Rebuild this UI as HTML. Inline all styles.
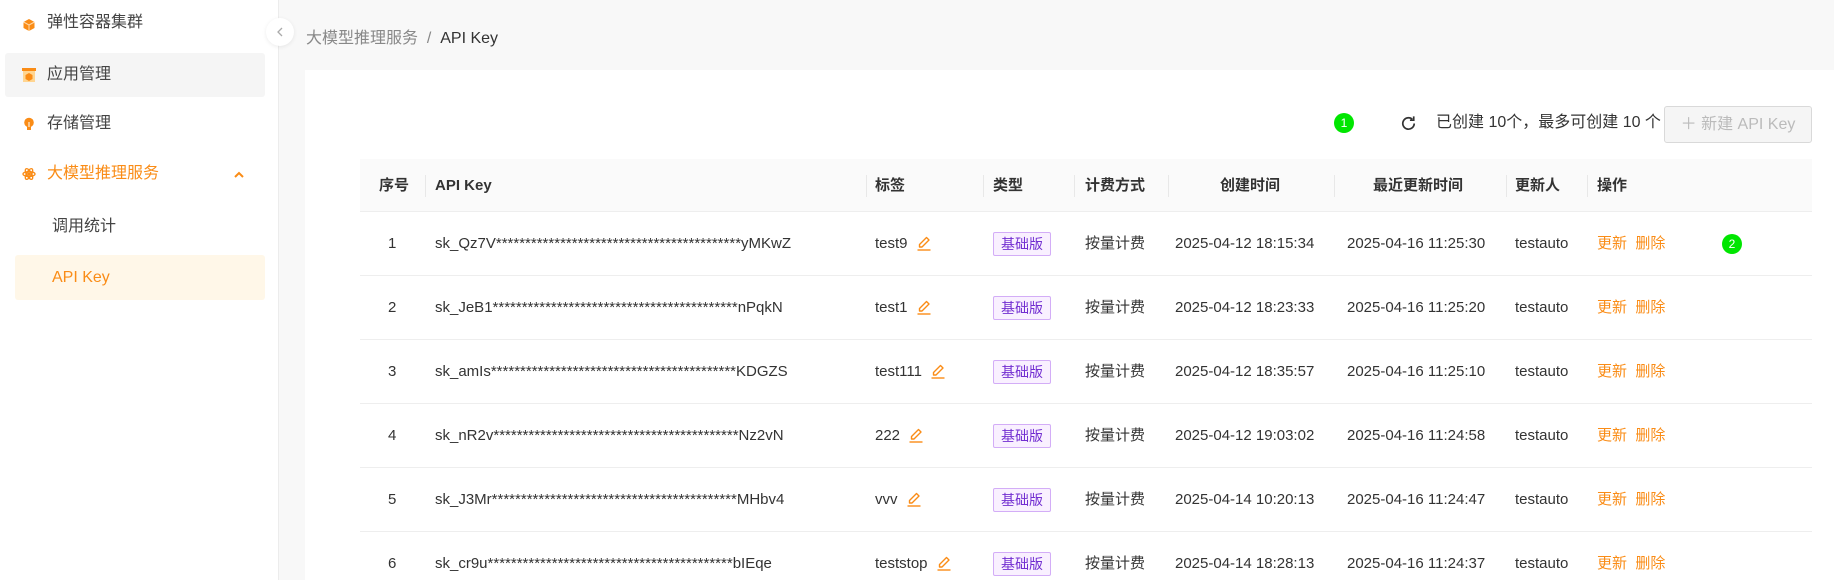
<!DOCTYPE html>
<html style="overflow:hidden;height:580px;background:#f8f8f8"><head><meta charset="utf-8"><style>
*{box-sizing:border-box;margin:0;padding:0}
body{width:1834px;height:580px;overflow:hidden;background:#f8f8f8;font-family:"Liberation Sans","Noto Sans CJK SC",sans-serif;color:#333;position:relative}
#wrap{position:absolute;left:0;top:0;width:1834px;height:580px;overflow:hidden}
.a{position:absolute;white-space:nowrap}
.side{position:absolute;left:0;top:0;width:279px;height:580px;background:#fff;border-right:1px solid #ececec}
.mi{position:absolute;font-size:16px;line-height:20px;color:#444}
.ic{position:absolute;width:14px;height:14px}
.card{position:absolute;left:305px;top:70px;width:1529px;height:510px;background:#fff}
.hd{position:absolute;left:360px;top:159px;width:1452px;height:53px;background:#fafafa;border-bottom:1px solid #eee}
.th{position:absolute;top:0;line-height:53px;font-size:15px;font-weight:bold;color:#333}
.sep{position:absolute;top:16px;width:1px;height:22px;background:#e8e8e8}
.row{position:absolute;left:360px;width:1452px;height:64px;border-bottom:1px solid #eee;font-size:15px;color:#333}
.row .a{line-height:64px}
.tag{position:absolute;left:633px;top:20px;width:58px;height:24px;border:1px solid #d3adf7;background:#f9f0ff;color:#722ed1;font-size:14px;line-height:22px!important;text-align:center;border-radius:2px}
.or{color:#fa8c16}
.pen{display:inline-block;vertical-align:middle;margin-left:8px;margin-top:-3px}
</style></head><body><div id="wrap">
<div class="side">
 <svg class="ic" style="left:22px;top:18px" viewBox="0 0 14 14"><path d="M7 1L12.5 4v6L7 13 1.5 10V4z" fill="#fa8c16"/><path d="M1.5 4L7 7l5.5-3M7 7v6" stroke="#ffd8a8" stroke-width="1" fill="none"/></svg>
 <div class="mi" style="left:47px;top:13px">弹性容器集群</div>
 <div class="a" style="left:5px;top:53px;width:260px;height:44px;background:#f5f5f5;border-radius:3px"></div>
 <svg class="ic" style="left:22px;top:68px" viewBox="0 0 14 14"><rect x="0" y="0" width="14" height="3" fill="#fa8c16"/><rect x="1" y="3" width="12" height="11" fill="#ffd591"/><path d="M7 5l3.5 2v4L7 13 3.5 11V7z" fill="#fa8c16"/></svg>
 <div class="mi" style="left:47px;top:65px">应用管理</div>
 <svg class="ic" style="left:22px;top:117px" viewBox="0 0 14 14"><circle cx="7" cy="5.5" r="4.8" fill="#fa8c16"/><rect x="5" y="10" width="4" height="3" fill="#fa8c16"/><path d="M7 5v5" stroke="#fff" stroke-width="1"/></svg>
 <div class="mi" style="left:47px;top:114px">存储管理</div>
 <svg class="ic" style="left:22px;top:167px" viewBox="0 0 14 14" fill="none" stroke="#fa8c16" stroke-width="1.3"><ellipse cx="7" cy="7" rx="6" ry="2.5"/><ellipse cx="7" cy="7" rx="6" ry="2.5" transform="rotate(60 7 7)"/><ellipse cx="7" cy="7" rx="6" ry="2.5" transform="rotate(-60 7 7)"/><circle cx="7" cy="7" r="1.2" fill="#fa8c16"/></svg>
 <div class="mi" style="left:47px;top:164px;color:#fa8c16">大模型推理服务</div>
 <svg class="a" style="left:233px;top:170px" width="12" height="10" viewBox="0 0 12 10"><path d="M2 7l4-4 4 4" stroke="#fa8c16" stroke-width="2" fill="none"/></svg>
 <div class="mi" style="left:52px;top:217px">调用统计</div>
 <div class="a" style="left:15px;top:255px;width:250px;height:45px;background:#fff7e8;border-radius:3px"></div>
 <div class="mi" style="left:52px;top:268px;color:#fa8c16">API Key</div>
</div>
<div class="a" style="left:266px;top:18px;width:28px;height:28px;border-radius:50%;background:#fff;box-shadow:0 1px 4px rgba(0,0,0,.08)"></div>
<svg class="a" style="left:275px;top:26px" width="10" height="12" viewBox="0 0 10 12"><path d="M7 2L3 6l4 4" stroke="#aaa" stroke-width="1.3" fill="none"/></svg>
<div class="a" style="left:306px;top:29px;font-size:16px;line-height:20px;color:#888">大模型推理服务 &nbsp;/&nbsp; <span style="color:#333">API Key</span></div>
<div class="card"></div>
<div class="a" style="left:1334px;top:113px;width:20px;height:20px;border-radius:50%;background:#00e600;color:#fff;font-size:12px;line-height:20px;text-align:center">1</div>
<svg class="a" style="left:1399px;top:114px" width="19" height="19" viewBox="0 0 20 20"><path d="M16 10a6 6 0 1 1-2-4.5" stroke="#333" stroke-width="1.8" fill="none"/><path d="M15.5 2.5v4h-4" stroke="#333" stroke-width="1.8" fill="none"/></svg>
<div class="a" style="left:1436px;top:113px;font-size:16px;line-height:20px;color:#333">已创建 10个，最多可创建 10 个</div>
<div class="a" style="left:1664px;top:106px;width:148px;height:37px;border:1px solid #d9d9d9;background:#f5f5f5;border-radius:3px;color:#bbb;font-size:16px;line-height:35px;text-align:center">＋ 新建 API Key</div>
<div class="hd">
 <div class="th" style="left:19px">序号</div><div class="sep" style="left:65px"></div>
 <div class="th" style="left:75px">API Key</div><div class="sep" style="left:506px"></div>
 <div class="th" style="left:515px">标签</div><div class="sep" style="left:623px"></div>
 <div class="th" style="left:633px">类型</div><div class="sep" style="left:714px"></div>
 <div class="th" style="left:725px">计费方式</div><div class="sep" style="left:808px"></div>
 <div class="th" style="left:860px">创建时间</div><div class="sep" style="left:974px"></div>
 <div class="th" style="left:1013px">最近更新时间</div><div class="sep" style="left:1146px"></div>
 <div class="th" style="left:1155px">更新人</div><div class="sep" style="left:1227px"></div>
 <div class="th" style="left:1237px">操作</div>
</div>
<svg width="0" height="0" style="position:absolute"><defs><symbol id="pn" viewBox="0 0 16 16"><path d="M10.5 2.5l2.5 2.5-7 7H3.5V9.5z" stroke="#fa8c16" stroke-width="1.4" fill="none" stroke-linejoin="round"/><path d="M1.5 15h13" stroke="#fa8c16" stroke-width="1.4"/></symbol></defs></svg>
<div class="row" style="top:212px"><div class="a" style="left:28px">1</div><div class="a" style="left:75px">sk_Qz7V******************************************yMKwZ</div><div class="a" style="left:515px">test9<svg class="pen" width="16" height="16"><use href="#pn"/></svg></div><div class="tag">基础版</div><div class="a" style="left:725px">按量计费</div><div class="a" style="left:815px">2025-04-12 18:15:34</div><div class="a" style="left:987px">2025-04-16 11:25:30</div><div class="a" style="left:1155px">testauto</div><div class="a or" style="left:1237px">更新 &nbsp;删除</div><div class="a" style="left:1362px;top:22px;width:20px;height:20px;border-radius:50%;background:#00e600;color:#fff;font-size:12px;line-height:20px!important;text-align:center">2</div></div>
<div class="row" style="top:276px"><div class="a" style="left:28px">2</div><div class="a" style="left:75px">sk_JeB1******************************************nPqkN</div><div class="a" style="left:515px">test1<svg class="pen" width="16" height="16"><use href="#pn"/></svg></div><div class="tag">基础版</div><div class="a" style="left:725px">按量计费</div><div class="a" style="left:815px">2025-04-12 18:23:33</div><div class="a" style="left:987px">2025-04-16 11:25:20</div><div class="a" style="left:1155px">testauto</div><div class="a or" style="left:1237px">更新 &nbsp;删除</div></div>
<div class="row" style="top:340px"><div class="a" style="left:28px">3</div><div class="a" style="left:75px">sk_amIs******************************************KDGZS</div><div class="a" style="left:515px">test111<svg class="pen" width="16" height="16"><use href="#pn"/></svg></div><div class="tag">基础版</div><div class="a" style="left:725px">按量计费</div><div class="a" style="left:815px">2025-04-12 18:35:57</div><div class="a" style="left:987px">2025-04-16 11:25:10</div><div class="a" style="left:1155px">testauto</div><div class="a or" style="left:1237px">更新 &nbsp;删除</div></div>
<div class="row" style="top:404px"><div class="a" style="left:28px">4</div><div class="a" style="left:75px">sk_nR2v******************************************Nz2vN</div><div class="a" style="left:515px">222<svg class="pen" width="16" height="16"><use href="#pn"/></svg></div><div class="tag">基础版</div><div class="a" style="left:725px">按量计费</div><div class="a" style="left:815px">2025-04-12 19:03:02</div><div class="a" style="left:987px">2025-04-16 11:24:58</div><div class="a" style="left:1155px">testauto</div><div class="a or" style="left:1237px">更新 &nbsp;删除</div></div>
<div class="row" style="top:468px"><div class="a" style="left:28px">5</div><div class="a" style="left:75px">sk_J3Mr******************************************MHbv4</div><div class="a" style="left:515px">vvv<svg class="pen" width="16" height="16"><use href="#pn"/></svg></div><div class="tag">基础版</div><div class="a" style="left:725px">按量计费</div><div class="a" style="left:815px">2025-04-14 10:20:13</div><div class="a" style="left:987px">2025-04-16 11:24:47</div><div class="a" style="left:1155px">testauto</div><div class="a or" style="left:1237px">更新 &nbsp;删除</div></div>
<div class="row" style="top:532px"><div class="a" style="left:28px">6</div><div class="a" style="left:75px">sk_cr9u******************************************bIEqe</div><div class="a" style="left:515px">teststop<svg class="pen" width="16" height="16"><use href="#pn"/></svg></div><div class="tag">基础版</div><div class="a" style="left:725px">按量计费</div><div class="a" style="left:815px">2025-04-14 18:28:13</div><div class="a" style="left:987px">2025-04-16 11:24:37</div><div class="a" style="left:1155px">testauto</div><div class="a or" style="left:1237px">更新 &nbsp;删除</div></div>
</div></body></html>
